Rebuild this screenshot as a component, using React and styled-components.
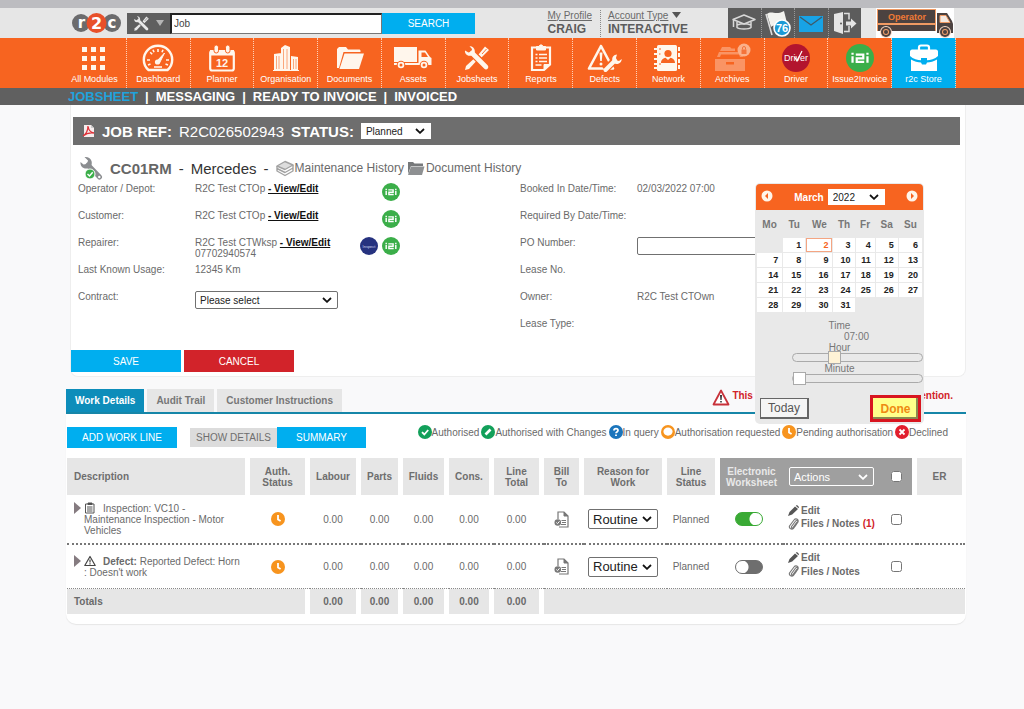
import React, { useState } from "react";
import styled, { createGlobalStyle, css } from "styled-components";

const cream = "#fff6ec";

// ---------- icons ----------

const Logo = () => (
  <svg width="50" height="20" viewBox="0 0 50 20" role="img" aria-label="r2c">
    <circle cx="9" cy="10" r="9" fill="#6b6b6d" />
    <circle cx="40" cy="10" r="9" fill="#6b6b6d" />
    <circle cx="24.5" cy="10" r="10" fill="#e8502a" />
    <g
      fill="#fff"
      fontFamily="DejaVu Sans, sans-serif"
      fontWeight="bold"
      textAnchor="middle"
    >
      <text x="9.5" y="15" fontSize="15">r</text>
      <text x="24.5" y="16" fontSize="16">2</text>
      <text x="40" y="15" fontSize="15">c</text>
    </g>
  </svg>
);

const GridIcon = () => (
  <svg width="26" height="26" viewBox="0 0 26 26" fill={cream}>
    {[2, 11, 20].map((y) =>
      [1, 10, 19].map((x) => (
        <rect key={`${x}-${y}`} x={x} y={y} width="5" height="5" />
      ))
    )}
  </svg>
);

const GaugeIcon = () => (
  <svg width="32" height="28" viewBox="0 0 32 28" fill="none" stroke={cream}>
    <path
      d="M6.5 26C3.5 23.5 1.8 20 1.8 15.8 1.8 8 8 1.8 16 1.8S30.2 8 30.2 15.8c0 4.2-1.7 7.7-4.7 10.2z"
      strokeWidth="2.4"
      strokeLinejoin="round"
    />
    <path
      d="M5 16h3M24 16h3M16 5v3M8.2 8.200l2 2M6 21l2.5-1M26 21l-2.5-1M11 5.800l1 2.400M21 5.800l-1 2.400"
      strokeWidth="1.6"
    />
    <path d="M14.5 17.5 22.5 9l-5 10z" fill={cream} strokeWidth="1" />
    <circle cx="15.5" cy="18" r="2.6" fill={cream} stroke="none" />
    <path d="M12 23h8" strokeWidth="1.6" />
  </svg>
);

const CalendarIcon = () => (
  <svg width="26" height="28" viewBox="0 0 26 28">
    <rect
      x="1.2"
      y="7"
      width="23.6"
      height="19.5"
      rx="2"
      fill="none"
      stroke={cream}
      strokeWidth="2.2"
    />
    <path d="M1 6h24v5.500H1z" fill={cream} />
    <rect x="5" y="1" width="4.5" height="8" rx="2.2" fill={cream} stroke="#f76420" />
    <rect x="16.5" y="1" width="4.5" height="8" rx="2.2" fill={cream} stroke="#f76420" />
    <text
      x="13"
      y="23"
      fontSize="11"
      fontWeight="bold"
      fontFamily="Liberation Sans, sans-serif"
      textAnchor="middle"
      fill={cream}
    >
      12
    </text>
  </svg>
);

const BuildingIcon = () => (
  <svg width="26" height="28" viewBox="0 0 26 28">
    <path d="M1 10l7-1v17H1zM8 4l4-3 5 2v23H8zM18 12l7 1v13h-7z" fill={cream} />
    <path
      d="M3.500 12v13M6 12v13M10.500 5v20M14 5v20M20.500 15v10M23 15v10"
      stroke="#f9935f"
      strokeWidth="0.8"
    />
    <path d="M0 26.500h26" stroke={cream} strokeWidth="1" />
  </svg>
);

const FolderIcon = () => (
  <svg width="30" height="26" viewBox="0 0 30 26" fill={cream}>
    <path d="M2 23V4l2-2h7l2 2.500h11c1 0 1.500.500 1.500 1.500v1H8.500L4 23z" />
    <path d="M9.500 8.500H29L24 24H4.500z" />
  </svg>
);

const TruckIcon = () => (
  <svg width="40" height="26" viewBox="0 0 40 26">
    <path d="M1 2h23v15H1zM25.500 5.500h7l4.500 6.500 1.500 1v7H1v-2h24.500z" fill={cream} />
    <path d="M28.500 7.500h3.500l3 4.500h-6.500z" fill="#f76420" />
    {[8, 31].map((x) => (
      <g key={x}>
        <circle cx={x} cy="20" r="4.3" fill="#f76420" />
        <circle cx={x} cy="20" r="2.4" fill="none" stroke={cream} strokeWidth="1.8" />
      </g>
    ))}
  </svg>
);

const ToolsIcon = ({ size = 28, color = cream, gap = "#f76420" }) => (
  <svg width={size} height={size} viewBox="0 0 28 28" fill="none">
    <path d="M2 26l1-4L15 11l2 2L6 25z" fill={color} />
    <path d="M15.500 10.500 22 2.500l4 3.500-7.500 7.500z" fill={color} />
    <path d="M19 10l4.500-5" stroke={gap} strokeWidth="0.9" />
    <path d="M8 8l16 16" stroke={gap} strokeWidth="7" />
    <path d="M9 9l14 14" stroke={color} strokeWidth="4.6" strokeLinecap="round" />
    <path
      d="M2 6.500C1.500 9 3.500 12 7 11.800c3 0 5-2.300 4.800-5C11.600 4 9 1.800 6.500 2.200L9 5 8.500 7.500 5.500 8.500z"
      fill={color}
    />
  </svg>
);

const ReportIcon = () => (
  <svg width="24" height="28" viewBox="0 0 24 28" fill="none" stroke={cream}>
    <path d="M8 3.500H3V26h12l6-5.500V3.500h-5" strokeWidth="2.2" />
    <path d="M7.500 2.500h2.500l1-1.500h2l1 1.500h2.500V6h-9z" fill={cream} strokeWidth="1" />
    <path
      d="M6.500 10.500h2M6.500 14h2M6.500 17.500h2M10 10.500h8M10 14h8M10 17.500h8M6.500 21h6"
      strokeWidth="1.5"
    />
    <path d="M15 26v-5.500h6z" fill={cream} />
  </svg>
);

const DefectIcon = () => (
  <svg width="36" height="30" viewBox="0 0 36 30" fill="none">
    <path d="M14 3 2 25.500h24z" stroke={cream} strokeWidth="2.6" strokeLinejoin="round" />
    <path d="M12.500 9.500h3l-.7 8.500h-1.600z" fill={cream} />
    <circle cx="14" cy="21" r="1.5" fill={cream} />
    <path d="M18 27 29 16" stroke="#f76420" strokeWidth="7" />
    <path d="M18.500 27 28 17.500" stroke={cream} strokeWidth="4" strokeLinecap="round" />
    <path
      d="M30 11.500c-3 .2-5.200 2.600-4.700 5.500.5 3 3.200 4.500 6 3.700 2.200-.7 3.500-2.500 3.400-4.700L32 18l-2.500-.8-.5-2.500z"
      fill={cream}
    />
  </svg>
);

const NetworkIcon = () => (
  <svg width="30" height="28" viewBox="0 0 30 28">
    <rect x="4" y="1" width="20" height="26" rx="1.5" fill={cream} />
    <path d="M1 5h5M1 10h5M1 15h5M1 20h5M1 24h5" stroke={cream} strokeWidth="2" />
    <path d="M26 3v4M26 9v4M26 15v4M26 21v4" stroke={cream} strokeWidth="2" />
    <circle cx="15" cy="9.5" r="3.6" fill="#f76420" />
    <path d="M8 19c0-3.500 2.500-5 4.500-5.300L15 16l2.500-2.300c2 .3 4.500 1.800 4.500 5.300z" fill="#f76420" />
    <path d="M6 5h2M6 10h1.500M6 20h2" stroke="#f76420" />
  </svg>
);

const ArchiveIcon = () => (
  <svg width="38" height="30" viewBox="0 0 38 30">
    <g fill="#fa9464">
      <path d="M2 16h30v12H2z" />
      <path d="M4 14 6 9h22l2 5h-3l-1-2.500H8L7 14z" />
      <path d="M7 8 9 4h8l1.500 1.500H22V8z" />
    </g>
    <path d="M13 19h8v2.500h-8z" fill="#f76420" />
    <circle cx="31" cy="7" r="6.5" fill="#fbb08a" />
    <rect x="28.500" y="6.5" width="5" height="4.5" fill="#f4733a" />
    <path d="M29.500 6.500V5a1.500 1.500 0 0 1 3 0v1.500" fill="none" stroke="#f4733a" />
  </svg>
);

const DriverIcon = () => (
  <svg width="30" height="30" viewBox="0 0 30 30">
    <circle cx="15" cy="15" r="14" fill="#b3152e" />
    <text
      x="15"
      y="18"
      fontSize="9"
      fontFamily="Liberation Sans, sans-serif"
      textAnchor="middle"
      fill="#fff"
    >
      Driver
    </text>
    <path d="M13.500 14l2.500 4 5-10" fill="none" stroke="#fff" strokeWidth="1.2" />
  </svg>
);

const I2iIcon = ({ size = 18 }) => (
  <svg width={size} height={size} viewBox="0 0 30 30" role="img" aria-label="i2i">
    <circle cx="15" cy="15" r="15" fill="#3bae49" />
    <g fill="none" stroke="#fff" strokeWidth="2.4">
      <path d="M7 13v7M23 13v7M10.500 11.500h8V15.500h-7v3.700h8" />
      <path d="M7 9.500v2M23 9.500v2" />
    </g>
  </svg>
);

const InspectIcon = () => (
  <svg width="18" height="18" viewBox="0 0 18 18">
    <circle cx="9" cy="9" r="9" fill="#26327f" />
    <text
      x="9"
      y="11"
      fontSize="4"
      fontFamily="Liberation Sans, sans-serif"
      textAnchor="middle"
      fill="#cfd3ee"
    >
      Inspect
    </text>
  </svg>
);

const BriefcaseIcon = () => (
  <svg width="30" height="28" viewBox="0 0 30 28">
    <path
      d="M10 6V3.500C10 2.500 11 1.500 12 1.500h6c1 0 2 1 2 2V6"
      fill="none"
      stroke="#fff"
      strokeWidth="2.2"
    />
    <path d="M3 5.500h24c1 0 2 1 2 2V12c-3 3-8 4-11 4.200V14h-6v2.200C9 16 4 15 1 12V7.500c0-1 1-2 2-2z" fill="#fff" />
    <path d="M2 15.500c3 2 7 2.800 10 3l1 2h4l1-2c3-.2 7-1 10-3V27H2z" fill="#fff" />
  </svg>
);

const CapIcon = () => (
  <svg
    width="26"
    height="20"
    viewBox="0 0 26 20"
    fill="none"
    stroke="#d8d8d8"
    strokeWidth="1.5"
    strokeLinejoin="round"
  >
    <path d="M2 6.500 13 2l11 4.500L13 11z" />
    <path d="M6 9v5.500c2 2 12 2 14 0V9M2.500 7v7M6 12c4-1.500 10-1.500 14 0" />
  </svg>
);

const FlagIcon = () => (
  <svg width="28" height="28" viewBox="0 0 28 28">
    <path d="M2 5 8 26" stroke="#ddd" strokeWidth="1.6" />
    <path d="M3 5c5-4 8 2 17-3l3 12c-8 5-11 0-16 4z" fill="#f2f2ee" />
    <circle cx="18" cy="19" r="8" fill="#1b9ad6" stroke="#fff" strokeWidth="1.6" />
    <text
      x="18"
      y="23"
      fontSize="11"
      fontWeight="bold"
      fontFamily="Liberation Sans, sans-serif"
      textAnchor="middle"
      fill="#fff"
    >
      76
    </text>
  </svg>
);

const MailIcon = () => (
  <svg width="24" height="17" viewBox="0 0 24 17">
    <rect width="24" height="16" y="1" fill="#18a3e6" />
    <path d="M1 2l11 8L23 2" fill="none" stroke="#3f5a68" strokeWidth="1.3" />
  </svg>
);

const DoorIcon = () => (
  <svg width="26" height="24" viewBox="0 0 26 24">
    <path d="M2 3 11 1v22l-9-3z" fill="#e4e4e4" />
    <path d="M12 2.500h5v6M17 15v5.500h-5" fill="none" stroke="#ddd" strokeWidth="1.5" />
    <path d="M14 10.500h5V7.500l5.500 5-5.500 5v-3h-5z" fill="#e4e4e4" />
    <circle cx="9" cy="12.5" r="1" fill="#5c5c5c" />
  </svg>
);

const OperatorTruck = () => (
  <svg width="78" height="30" viewBox="0 0 78 30" role="img" aria-label="Operator">
    <rect width="78" height="30" fill="#fff" />
    <path d="M1 1h59v22H1z" fill="#f09a63" />
    <path d="M2 2h57v13H2zM2 17h57v6H2z" fill="#4c4240" />
    <path d="M61 5h10l5 8 1 3v9H61z" fill="#4c4240" />
    <path d="M64 7.500h6l4 7H64z" fill="#f5e9e0" stroke="#f09a63" />
    {[10, 69].map((x) => (
      <g key={x}>
        <circle cx={x} cy="24" r="6" fill="#f7d9c6" />
        <circle cx={x} cy="24" r="5" fill="#4c4240" />
        <circle cx={x} cy="24" r="3" fill="#f2a06b" />
        <circle cx={x} cy="24" r="2" fill="#4c4240" />
      </g>
    ))}
    <text
      x="31"
      y="12"
      fontSize="9"
      fontFamily="Liberation Sans, sans-serif"
      fontWeight="bold"
      textAnchor="middle"
      fill="#f07a35"
    >
      Operator
    </text>
  </svg>
);

const PdfIcon = () => (
  <svg width="13" height="14" viewBox="0 0 13 14">
    <path d="M2 1h7l3 3v9H2z" fill="#f7eeee" />
    <path d="M9 1v3h3" fill="#ccc" />
    <path
      d="M1 12c3-2 5-6 5-10 .5 4 3 6.500 6 7-4-.5-8 .5-11 3z"
      fill="none"
      stroke="#e0333a"
      strokeWidth="1.3"
    />
  </svg>
);

const WrenchIcon = () => (
  <svg width="24" height="25" viewBox="0 0 24 25">
    <path d="M9 9l11.500 12" stroke="#8b8d90" strokeWidth="5" strokeLinecap="round" />
    <path
      d="M1.500 6C1 10 4 13 8 12.500c4-.3 5.500-4 4.500-7.500C11.500 2 8.500.5 5.500 1L9 4.500 8 8l-3.500.5z"
      fill="#8b8d90"
    />
    <circle cx="20.3" cy="21" r="1.2" fill="#fff" />
    <circle cx="11" cy="18" r="5" fill="#3bae49" stroke="#fff" />
    <path d="M8.500 18l2 2 3.200-3.800" fill="none" stroke="#fff" strokeWidth="1.4" />
  </svg>
);

const StackIcon = () => (
  <svg
    width="18"
    height="17"
    viewBox="0 0 18 17"
    fill="none"
    stroke="#a2a2a2"
    strokeWidth="1.4"
    strokeLinejoin="round"
  >
    <path d="M1 6l8-4.500L17 5 9 9.500z" fill="#ddd" />
    <path d="M1 6v5l8 4.500 8-4.500V5M1 8.500 9 12.500l8-4.500" />
  </svg>
);

const GreyFolder = () => (
  <svg width="18" height="15" viewBox="0 0 18 15">
    <path d="M1 1h5l1.500 1.500H16V5H4L1 13z" fill="#77797b" />
    <path d="M4 5.500h13.500L15 14H1z" fill="#8e9092" />
  </svg>
);

const Chevron = ({ color = "#111" }) => (
  <svg width="10" height="6" viewBox="0 0 10 6" fill="none" stroke={color} strokeWidth="1.8">
    <path d="M1 1l4 3.800L9 1" />
  </svg>
);

const WarningIcon = () => (
  <svg width="18" height="17" viewBox="0 0 18 17">
    <path
      d="M9 1.500 1.500 15.500h15z"
      fill="#fff"
      stroke="#c8323a"
      strokeWidth="1.8"
      strokeLinejoin="round"
    />
    <path d="M8 6h2l-.4 5H8.400zM8.200 12h1.600v1.500H8.200z" fill="#333" />
  </svg>
);

const statusMarks = {
  authorised: ["#12a05a", <path key="m" d="M4 7.200l2.300 2.300L10.200 5" />],
  changes: ["#12a05a", <path key="m" d="M4.500 9.500l5-5" strokeWidth="2.6" />],
  query: ["#1b75bc", <path key="m" d="M5 5.500C5 3 9 3 9 5.300 9 7 7 6.800 7 8.300M7 9.600v1.400" />],
  requested: ["#f7941e", <ellipse key="m" cx="7" cy="6.6" rx="3.7" ry="3.2" fill="#fff" />],
  pending: ["#f7941e", <path key="m" d="M7 3v4.500l2.600 1.600" />],
  declined: ["#e21f2d", <path key="m" d="M4.500 4.500l5 5M9.500 4.500l-5 5" />],
};

const StatusIcon = ({ kind }) => {
  const [color, mark] = statusMarks[kind];
  return (
    <svg width="14" height="14" viewBox="0 0 14 14" role="img" aria-label={kind}>
      <circle cx="7" cy="7" r="7" fill={color} />
      <g fill="none" stroke="#fff" strokeWidth="1.8">{mark}</g>
    </svg>
  );
};

const ArrowIcon = () => (
  <svg width="7" height="12" viewBox="0 0 7 12">
    <path d="M0 0l7 6-7 6z" fill="#857b80" />
  </svg>
);

const NoteIcon = () => (
  <svg width="12" height="12" viewBox="0 0 12 12" fill="none" stroke="#555">
    <path d="M1.500 2h8.500v9h-8.500z" />
    <path d="M4 1h4v1.500H4z" fill="#444" />
    <path d="M3 5h5.500M3 7h5.500M3 9h5.500" />
  </svg>
);

const SmallWarning = () => (
  <svg width="12" height="12" viewBox="0 0 12 12" fill="none" stroke="#444">
    <path d="M6 1.500.8 10.500h10.400z" strokeWidth="1.2" strokeLinejoin="round" />
    <path d="M6 4.500v3M6 8.300v1.200" strokeWidth="1.2" />
  </svg>
);

const BillIcon = () => (
  <svg width="15" height="17" viewBox="0 0 15 17" fill="none" stroke="#777">
    <path d="M4 8V1h6l4 4v11H5" strokeWidth="1.2" />
    <path d="M10 1v4h4z" fill="#777" />
    <path d="M7.500 9.500H12M8 11.500h4M7 13.500h5" />
    <circle cx="3.8" cy="11.5" r="3.3" fill="#777" stroke="none" />
    <path d="M2.300 11.500l1.200 1.200 2-2.400" stroke="#fff" />
  </svg>
);

const PencilIcon = () => (
  <svg width="11" height="11" viewBox="0 0 11 11">
    <path d="M0 11l1.500-4L7 1.500l3 2.500-5.800 5.500zM7.800.8 9 0l2 2-.5 1.200z" fill="#555" />
  </svg>
);

const ClipIcon = () => (
  <svg width="11" height="12" viewBox="0 0 11 12" fill="none" stroke="#777" strokeWidth="1.1">
    <path d="M9 4 5 9.500C4.300 10.500 3 10 3.400 8.800L7.600 3c1-1.200 2.700 0 2 1.400L5.500 10.300C4 12 .5 10.800 1.500 8L6 2C7.500 0 11 1 10 4L7 8.500" />
  </svg>
);

const RoundArrow = ({ flip }) => (
  <svg width="12" height="12" viewBox="0 0 12 12">
    <circle cx="6" cy="6" r="5.5" fill="#fff5ea" />
    <path d={flip ? "M5 3l3 3-3 3z" : "M7 3L4 6l3 3z"} fill="#f76420" />
  </svg>
);

// ---------- data ----------

const modules = [
  ["All Modules", <GridIcon />],
  ["Dashboard", <GaugeIcon />],
  ["Planner", <CalendarIcon />],
  ["Organisation", <BuildingIcon />],
  ["Documents", <FolderIcon />],
  ["Assets", <TruckIcon />],
  ["Jobsheets", <ToolsIcon />],
  ["Reports", <ReportIcon />],
  ["Defects", <DefectIcon />],
  ["Network", <NetworkIcon />],
  ["Archives", <ArchiveIcon />],
  ["Driver", <DriverIcon />],
  ["Issue2Invoice", <I2iIcon size={28} />],
  ["r2c Store", <BriefcaseIcon />],
];

const legend = [
  ["authorised", "Authorised"],
  ["changes", "Authorised with Changes"],
  ["query", "In query"],
  ["requested", "Authorisation requested"],
  ["pending", "Pending authorisation"],
  ["declined", "Declined"],
];

const columns = [183, 60, 51, 42, 46, 45, 50, 40, 83, 53, 63, 97, 37, 48];

const weeks = [
  ["", 1, 2, 3, 4, 5, 6],
  [7, 8, 9, 10, 11, 12, 13],
  [14, 15, 16, 17, 18, 19, 20],
  [21, 22, 23, 24, 25, 26, 27],
  [28, 29, 30, 31, "", "", ""],
];

const jobLines = [
  { id: 1, on: true, notes: 1, icon: <NoteIcon />, text: "Inspection: VC10 - Maintenance Inspection - Motor Vehicles" },
  { id: 2, on: false, notes: 0, icon: <SmallWarning />, title: "Defect:", text: " Reported Defect: Horn : Doesn't work" },
];

// ---------- parts ----------

function Select({ label, options, color, ...rest }) {
  return (
    <SelectBox {...rest}>
      <select aria-label={label}>
        {options.map((option) => (
          <option key={option}>{option}</option>
        ))}
      </select>
      <Chevron color={color} />
    </SelectBox>
  );
}

function Header() {
  return (
    <TopBar>
      <Logo />
      <Search>
        <SearchType type="button" aria-label="Search type">
          <ToolsIcon size={17} color="#e8e8e8" gap="#5f5f5f" />
          <svg width="8" height="6" viewBox="0 0 8 6">
            <path d="M0 0h8L4 6z" fill="#b5b5b5" />
          </svg>
        </SearchType>
        <input aria-label="Search" defaultValue="Job" />
        <Button $w={93} $h={21}>SEARCH</Button>
      </Search>
      <Account>
        <div>
          <a href="#profile">My Profile</a>
          <strong>CRAIG</strong>
        </div>
        <div>
          <span>
            <a href="#account">Account Type</a>
            <svg width="9" height="6" viewBox="0 0 9 6">
              <path d="M0 0h9L4.500 6z" fill="#555" />
            </svg>
          </span>
          <strong>INTERACTIVE</strong>
        </div>
      </Account>
      <Shortcuts>
        <button aria-label="Training"><CapIcon /></button>
        <button aria-label="Flags"><FlagIcon /></button>
        <button aria-label="Messages"><MailIcon /></button>
        <button aria-label="Log out"><DoorIcon /></button>
      </Shortcuts>
      <OperatorTruck />
    </TopBar>
  );
}

function DatePicker() {
  const [hour, setHour] = useState(7);
  const [minute, setMinute] = useState(0);
  const time = `${String(hour).padStart(2, "0")}:${String(minute).padStart(2, "0")}`;

  return (
    <Picker>
      <PickerHead>
        <button aria-label="Previous month"><RoundArrow /></button>
        <div>
          <b>March</b>
          <Select label="Year" options={["2022"]} $w={57} $h={16} $plain />
        </div>
        <button aria-label="Next month"><RoundArrow flip /></button>
      </PickerHead>
      <Calendar>
        <colgroup>
          {[25, 22, 26, 21, 19, 22, 23].map((w, i) => (
            <col key={i} width={w} />
          ))}
        </colgroup>
        <thead>
          <tr>
            {["Mo", "Tu", "We", "Th", "Fr", "Sa", "Su"].map((day) => (
              <th key={day}>{day}</th>
            ))}
          </tr>
        </thead>
        <tbody>
          {weeks.map((week, i) => (
            <tr key={i}>
              {week.map((day, j) => (
                <Day key={j} $today={day === 2} $empty={!day}>
                  {day}
                </Day>
              ))}
            </tr>
          ))}
        </tbody>
      </Calendar>
      <TimeBox>
        <p>Time</p>
        <output>{time}</output>
        <label htmlFor="hour">Hour</label>
        <Slider
          id="hour"
          type="range"
          max="23"
          value={hour}
          $thumb="#fff3d6"
          onChange={(e) => setHour(Number(e.target.value))}
        />
        <label htmlFor="minute">Minute</label>
        <Slider
          id="minute"
          type="range"
          max="59"
          value={minute}
          $thumb="#fff"
          onChange={(e) => setMinute(Number(e.target.value))}
        />
      </TimeBox>
      <PickerFoot>
        <TodayButton>Today</TodayButton>
        <DoneButton>Done</DoneButton>
      </PickerFoot>
    </Picker>
  );
}

function JobDetails() {
  return (
    <JobCard>
      <JobBar>
        <PdfIcon />
        <b>JOB REF:</b>
        <span>R2C026502943</span>
        <b>STATUS:</b>
        <Select label="Status" options={["Planned"]} $w={70} $h={16} $plain />
      </JobBar>
      <Vehicle>
        <WrenchIcon />
        <h1>CC01RM</h1>
        <span>-</span>
        <span>Mercedes</span>
        <span>-</span>
        <HistoryLinks>
          <a href="#maintenance"><StackIcon />Maintenance History</a>
          <a href="#documents"><GreyFolder />Document History</a>
        </HistoryLinks>
      </Vehicle>
      <Details>
        <div>
          <Field>
            <span>Operator / Depot:</span>
            <div>R2C Test CTOp <a href="#operator">- View/Edit</a></div>
            <Badges><I2iIcon /></Badges>
          </Field>
          <Field>
            <span>Customer:</span>
            <div>R2C Test CTOp <a href="#customer">- View/Edit</a></div>
            <Badges><I2iIcon /></Badges>
          </Field>
          <Field>
            <span>Repairer:</span>
            <div>
              R2C Test CTWksp <a href="#repairer">- View/Edit</a>
              <br />
              07702940574
            </div>
            <Badges><InspectIcon /><I2iIcon /></Badges>
          </Field>
          <Field>
            <span>Last Known Usage:</span>
            <div>12345 Km</div>
          </Field>
          <Field>
            <span>Contract:</span>
            <Select label="Contract" options={["Please select"]} $w={143} $h={18} />
          </Field>
        </div>
        <div>
          <Field>
            <span>Booked In Date/Time:</span>
            <PickerAnchor>
              02/03/2022 07:00
              <DatePicker />
            </PickerAnchor>
          </Field>
          <Field><span>Required By Date/Time:</span></Field>
          <Field>
            <label htmlFor="po">PO Number:</label>
            <input id="po" />
          </Field>
          <Field><span>Lease No.</span></Field>
          <Field><span>Owner:</span><div>R2C Test CTOwn</div></Field>
          <Field><span>Lease Type:</span></Field>
        </div>
      </Details>
      <FormButtons>
        <Button $w={110} $h={22}>SAVE</Button>
        <Button $w={110} $h={22} $color="#d2232a">CANCEL</Button>
      </FormButtons>
    </JobCard>
  );
}

function WorkLines() {
  return (
    <WorkTable>
      <colgroup>
        {columns.map((w, i) => (
          <col key={i} width={w} />
        ))}
      </colgroup>
      <thead>
        <tr>
          <HeadCell $left>Description</HeadCell>
          {["Auth. Status", "Labour", "Parts", "Fluids", "Cons.", "Line Total", "Bill To", "Reason for Work", "Line Status"].map(
            (name) => <HeadCell key={name}>{name}</HeadCell>
          )}
          <HeadCell $dark>Electronic Worksheet</HeadCell>
          <HeadCell $dark>
            <Select label="Actions" options={["Actions"]} color="#fff" $w={85} $h={19} $ghost />
          </HeadCell>
          <HeadCell $dark $end>
            <input type="checkbox" aria-label="Select all" />
          </HeadCell>
          <HeadCell>ER</HeadCell>
        </tr>
      </thead>
      <tbody>
        {jobLines.map((line) => (
          <Line key={line.id} $tall={line.id === 1}>
            <td>
              <Description>
                <ArrowIcon />
                <p>
                  {line.icon}
                  {line.title && <b>{line.title}</b>}
                  {line.text}
                </p>
              </Description>
            </td>
            <td><StatusIcon kind="pending" /></td>
            <td>0.00</td>
            <td>0.00</td>
            <td>0.00</td>
            <td>0.00</td>
            <td>0.00</td>
            <td><BillIcon /></td>
            <td>
              <Select label="Reason for work" options={["Routine"]} $w={70} $h={20} $large />
            </td>
            <td>Planned</td>
            <td>
              <Toggle type="checkbox" aria-label="Electronic worksheet" defaultChecked={line.on} />
            </td>
            <td>
              <LineLinks>
                <a href="#edit"><PencilIcon />Edit</a>
                <a href="#notes">
                  <ClipIcon />
                  <span>Files / Notes {line.notes > 0 && <em>({line.notes})</em>}</span>
                </a>
              </LineLinks>
            </td>
            <td><Tick type="checkbox" aria-label="Select line" /></td>
            <td />
          </Line>
        ))}
      </tbody>
      <tfoot>
        <tr>
          <TotalCell colSpan="2" $left>Totals</TotalCell>
          {[1, 2, 3, 4, 5].map((n) => (
            <TotalCell key={n}>0.00</TotalCell>
          ))}
          <TotalCell colSpan="7" $last />
        </tr>
      </tfoot>
    </WorkTable>
  );
}

export default function App() {
  return (
    <>
      <GlobalStyle />
      <Header />
      <Modules>
        {modules.map(([name, icon]) => (
          <a key={name} href="#module" className={name === "r2c Store" ? "store" : ""}>
            <span>{icon}</span>
            {name}
          </a>
        ))}
      </Modules>
      <SubMenu>
        <a href="#jobsheet" className="on">JOBSHEET</a>
        <a href="#messaging">MESSAGING</a>
        <a href="#ready">READY TO INVOICE</a>
        <a href="#invoiced">INVOICED</a>
      </SubMenu>
      <Main>
        <JobDetails />
        <Tabs>
          <Tab $on>Work Details</Tab>
          <Tab>Audit Trail</Tab>
          <Tab>Customer Instructions</Tab>
          <Alert>
            <WarningIcon />
            This asset has 1 defect that requires attention.
          </Alert>
        </Tabs>
        <WorkCard>
          <Toolbar>
            <Button $w={110} $h={21}>ADD WORK LINE</Button>
            <ViewSwitch>
              <Button $w={87} $h={19} $color="#dcdcdc" $text="#6e6e6e">SHOW DETAILS</Button>
              <Button $w={89} $h={21}>SUMMARY</Button>
            </ViewSwitch>
            <Legend>
              {legend.map(([kind, name]) => (
                <li key={kind}><StatusIcon kind={kind} />{name}</li>
              ))}
            </Legend>
          </Toolbar>
          <WorkLines />
        </WorkCard>
      </Main>
    </>
  );
}

// ---------- styles ----------

const GlobalStyle = createGlobalStyle`
  * {
    box-sizing: border-box;
  }
  body {
    margin: 0;
    background-color: #f9f9fa;
    font-family: "Liberation Sans", Arial, sans-serif;
    font-size: 10px;
    line-height: 11px;
    color: #6a6a6a;
  }
  h1, p, ul {
    margin: 0;
    padding: 0;
  }
  button, input, select {
    font-family: inherit;
    font-size: 10px;
  }
  button {
    padding: 0;
    border: none;
    background: none;
  }
  a {
    color: inherit;
    text-decoration: none;
  }
  svg {
    flex-shrink: 0;
  }
`;

const Button = styled.button`
  min-width: ${({ $w }) => $w}px;
  height: ${({ $h }) => $h}px;
  color: ${({ $text }) => $text || "#fff"};
  background-color: ${({ $color }) => $color || "#00aeef"};
`;

const SelectBox = styled.div`
  position: relative;
  display: inline-block;
  width: ${({ $w }) => $w}px;
  vertical-align: middle;
  select {
    display: block;
    width: 100%;
    height: ${({ $h }) => $h}px;
    padding: 0 4px;
    appearance: none;
    border: 1px solid #707070;
    border-radius: 2px;
    background-color: #fff;
    color: #222;
    ${({ $plain }) => $plain && css`
      border-color: #fff;
      border-radius: 0;
    `}
    ${({ $large }) => $large && css`
      font-size: 13px;
    `}
    ${({ $ghost }) => $ghost && css`
      border-color: #fff;
      background-color: transparent;
      color: #fff;
      font-size: 11px;
    `}
  }
  svg {
    position: absolute;
    top: 50%;
    right: 6px;
    transform: translateY(-50%);
    pointer-events: none;
  }
`;

const TopBar = styled.header`
  display: flex;
  align-items: center;
  height: 38px;
  padding: 0 70px 0 72px;
  border-top: 8px solid #bcbcc0;
  background-color: #e6e6e6;
`;

const Search = styled.form`
  display: flex;
  flex: 1;
  max-width: 348px;
  margin-left: 5px;
  input {
    flex: 1;
    min-width: 0;
    padding: 0 2px;
    border: 2px inset #777;
    border-right-width: 1px;
    border-bottom-width: 1px;
    color: #444;
  }
`;

const SearchType = styled.button`
  display: flex;
  align-items: center;
  justify-content: space-between;
  width: 43px;
  height: 21px;
  padding: 0 6px;
  background-color: #5f5f5f;
`;

const Account = styled.div`
  display: flex;
  margin-left: auto;
  div {
    display: flex;
    flex-direction: column;
    padding: 0 8px 0 11px;
  }
  div + div {
    padding: 0 40px 0 7px;
    border-left: 1px dotted #888;
  }
  span {
    display: flex;
    align-items: center;
    gap: 4px;
  }
  a {
    text-decoration: underline;
  }
  strong {
    font-size: 12px;
    line-height: 16px;
    color: #5c5c5c;
  }
`;

const Shortcuts = styled.div`
  display: flex;
  width: 133px;
  height: 30px;
  margin-right: 15px;
  background-color: #5c5c5c;
  button {
    display: flex;
    flex: 1;
    align-items: center;
    justify-content: center;
  }
  button + button {
    border-left: 1px dotted #999;
  }
`;

const Modules = styled.nav`
  display: grid;
  grid-template-columns: repeat(14, 1fr);
  height: 50px;
  padding: 0 68px 0 63px;
  background-color: #f76420;
  a {
    display: flex;
    flex-direction: column;
    align-items: center;
    border-right: 1px dotted #fdd0b8;
    font-size: 9px;
    color: #fff;
  }
  a.store {
    background-color: #00aeef;
  }
  span {
    display: flex;
    align-items: center;
    height: 36px;
    padding-top: 4px;
  }
`;

const SubMenu = styled.nav`
  display: flex;
  height: 17px;
  padding-left: 68px;
  background-color: #606060;
  font-size: 13px;
  line-height: 17px;
  font-weight: bold;
  color: #fff;
  a + a::before {
    content: "|";
    margin: 0 7px;
    color: #fff;
  }
  a.on {
    color: #1fa3dc;
  }
`;

const Main = styled.main`
  padding: 0 58px 20px 66px;
`;

const JobCard = styled.section`
  margin-left: 4px;
  padding: 12px 0 4px;
  border: 1px solid #eee;
  border-top: none;
  border-radius: 0 0 8px 8px;
  background-color: #fff;
`;

const JobBar = styled.div`
  display: flex;
  align-items: center;
  gap: 7px;
  height: 28px;
  margin: 0 5px 0 2px;
  padding-left: 9px;
  background-color: #6e6e6e;
  font-size: 15px;
  color: #fff;
`;

const Vehicle = styled.div`
  display: flex;
  align-items: center;
  gap: 7px;
  padding: 11px 0 2px 8px;
  font-size: 15px;
  color: #333;
  h1 {
    font-size: 15px;
    color: #666;
  }
`;

const HistoryLinks = styled.div`
  display: flex;
  gap: 3px;
  font-size: 12px;
  color: #6a6a6a;
  a {
    display: flex;
    align-items: center;
    gap: 1px;
  }
`;

const Details = styled.div`
  display: grid;
  grid-template-columns: 442fr 445fr;
  padding-left: 7px;
`;

const Field = styled.div`
  display: grid;
  grid-template-columns: 117px 165px 40px;
  align-items: start;
  height: 27px;
  a {
    font-weight: bold;
    text-decoration: underline;
    color: #111;
  }
  > input {
    height: 18px;
    border: 1px solid #707070;
    border-radius: 2px;
  }
`;

const Badges = styled.div`
  display: flex;
  justify-content: flex-end;
  gap: 4px;
`;

const FormButtons = styled.div`
  display: flex;
  gap: 3px;
  margin-top: 5px;
`;

const PickerAnchor = styled.div`
  position: relative;
`;

const Picker = styled.div`
  position: absolute;
  z-index: 10;
  top: 0;
  left: 118px;
  width: 169px;
  padding: 1px 1px 2px;
  border-radius: 5px;
  background-color: #e9e9e9;
`;

const PickerHead = styled.div`
  display: flex;
  align-items: center;
  justify-content: space-between;
  height: 26px;
  padding: 0 5px;
  border-radius: 4px 4px 0 0;
  background-color: #f76420;
  color: #fff;
  div {
    display: flex;
    align-items: center;
    gap: 4px;
  }
`;

const Calendar = styled.table`
  width: 100%;
  table-layout: fixed;
  border-spacing: 1px;
  th {
    height: 26px;
    padding: 0;
    color: #777;
  }
`;

const Day = styled.td`
  height: 14px;
  padding: 0 3px 0 0;
  border: 1px solid ${({ $today }) => ($today ? "#f4a582" : "transparent")};
  background-color: ${({ $empty }) => ($empty ? "transparent" : "#fff")};
  font-size: 9px;
  font-weight: bold;
  text-align: right;
  color: ${({ $today }) => ($today ? "#f76420" : "#222")};
`;

const TimeBox = styled.div`
  display: flex;
  flex-direction: column;
  align-items: center;
  padding-top: 7px;
  color: #777;
  output {
    padding-left: 34px;
  }
`;

const Slider = styled.input`
  align-self: flex-end;
  width: 131px;
  height: 9px;
  margin: 0 0 1px;
  appearance: none;
  border: 1px solid #aaa;
  border-radius: 5px;
  background-color: #e9e9e9;
  &::-webkit-slider-runnable-track {
    height: 7px;
  }
  &::-webkit-slider-thumb {
    appearance: none;
    width: 13px;
    height: 13px;
    margin-top: -3px;
    border: 1px solid #aaa;
    background-color: ${({ $thumb }) => $thumb};
  }
`;

const PickerFoot = styled.div`
  display: flex;
  align-items: center;
  justify-content: space-between;
  margin-top: 11px;
  padding: 0 2px 0 4px;
`;

const TodayButton = styled.button`
  width: 49px;
  height: 21px;
  border: 1px solid #666;
  border-right-width: 2px;
  border-bottom-width: 2px;
  background-color: #f5f5f5;
  font-size: 12px;
  color: #555;
`;

const DoneButton = styled.button`
  width: 51px;
  height: 27px;
  border: 3px solid #d8151f;
  background-color: #ffff8a;
  box-shadow: inset -2px -2px 0 #8a8a50;
  font-size: 12px;
  font-weight: bold;
  color: #ee8a12;
`;

const Tabs = styled.div`
  display: flex;
  gap: 3px;
  margin-top: 12px;
  border-bottom: 2px solid #1686a8;
`;

const Tab = styled.button`
  height: 23px;
  padding: 0 9px;
  background-color: ${({ $on }) => ($on ? "#0d8dba" : "#e6e6e6")};
  font-weight: bold;
  color: ${({ $on }) => ($on ? "#fff" : "#777")};
`;

const Alert = styled.p`
  display: flex;
  gap: 2px;
  margin-left: auto;
  padding-right: 13px;
  font-weight: bold;
  line-height: 13px;
  color: #d2232a;
`;

const WorkCard = styled.section`
  padding: 13px 1px 10px;
  border-radius: 0 0 10px 10px;
  background-color: #fff;
  box-shadow: 0 1px 1px #e6e6e6;
`;

const Toolbar = styled.div`
  display: flex;
  align-items: flex-start;
  margin-bottom: 10px;
`;

const ViewSwitch = styled.div`
  display: flex;
  align-items: center;
  margin-left: 13px;
`;

const Legend = styled.ul`
  display: flex;
  gap: 2px;
  margin: -2px 17px 0 auto;
  list-style: none;
  li {
    display: flex;
    align-items: center;
    white-space: nowrap;
  }
`;

const WorkTable = styled.table`
  width: 100%;
  table-layout: fixed;
  border-spacing: 0;
  svg {
    vertical-align: middle;
  }
`;

const HeadCell = styled.th`
  height: 37px;
  padding: 0 ${({ $left }) => ($left ? "7px" : "4px")};
  border-right: ${({ $dark, $end }) => ($dark && !$end ? "none" : "5px solid #fff")};
  background-color: ${({ $dark }) => ($dark ? "#9f9f9f" : "#e6e6e6")};
  text-align: ${({ $left }) => ($left ? "left" : "center")};
  color: ${({ $dark }) => ($dark ? "#e9e9e9" : "#6e6e6e")};
  &:last-child {
    border-right-width: 3px;
  }
  input {
    width: 11px;
    height: 11px;
    margin: 0;
    vertical-align: middle;
  }
`;

const Line = styled.tr`
  height: ${({ $tall }) => ($tall ? 50 : 44)}px;
  td {
    padding: 0 5px 0 0;
    border-bottom: ${({ $tall }) => ($tall ? "2px dotted #777" : "1px dotted #888")};
    text-align: center;
  }
`;

const Tick = styled.input`
  width: 11px;
  height: 11px;
  margin: 0;
  vertical-align: middle;
`;

const Description = styled.div`
  display: flex;
  gap: 3px;
  padding: 0 2px 0 7px;
  text-align: left;
  p svg {
    margin-right: 7px;
    vertical-align: bottom;
  }
`;

const Toggle = styled.input`
  appearance: none;
  width: 28px;
  height: 14px;
  margin: 0;
  vertical-align: middle;
  border: 1px solid #6e6e6e;
  border-radius: 7px;
  background: radial-gradient(circle at 6px 6px, #fff 6px, #6e6e6e 7px);
  &:checked {
    border-color: #3aaa35;
    background: radial-gradient(circle at 20px 6px, #fff 6px, #3aaa35 7px);
  }
`;

const LineLinks = styled.div`
  display: flex;
  flex-direction: column;
  gap: 2px;
  padding: 0 0 4px 5px;
  font-weight: bold;
  a {
    display: flex;
    align-items: center;
    gap: 2px;
    white-space: nowrap;
  }
  em {
    font-style: normal;
    color: #d2232a;
  }
`;

const TotalCell = styled.td`
  height: 25px;
  padding: 0 7px;
  border-right: ${({ $last }) => ($last ? "none" : "5px solid #fff")};
  background-color: #e6e6e6;
  font-weight: bold;
  text-align: ${({ $left }) => ($left ? "left" : "center")};
`;
